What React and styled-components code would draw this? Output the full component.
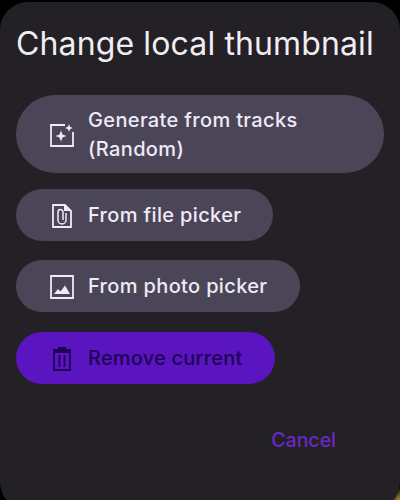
import styled, { createGlobalStyle } from 'styled-components'

const GlobalStyle = createGlobalStyle`
  html, body {
    margin: 0;
    height: 500px;
    overflow: hidden;
    background: radial-gradient(circle at 100% 100%, #a8843f 0, #3a2c16 9px, #000 14px);
  }
`;

const Dialog = styled.div`
  box-sizing: border-box;
  width: 400px;
  height: 508px;
  margin-top: 2px;
  padding: 22px 16px 0;
  border-radius: 28px;
  background: #232026;
  font-family: Inter, "Noto Sans", sans-serif;
`;

const Title = styled.h1`
  margin: 0 0 31px;
  font-size: 32px;
  line-height: 40px;
  font-weight: 400;
  letter-spacing: 0.13px;
  color: #f1edf2;
  white-space: nowrap;
`;

const Actions = styled.div`
  display: flex;
  flex-direction: column;
  align-items: flex-start;
`;

const Pill = styled.button`
  box-sizing: border-box;
  display: flex;
  align-items: center;
  gap: 14px;
  width: ${props => props.$width}px;
  min-height: 52px;
  margin-bottom: ${props => props.$after}px;
  padding: 1px 24px 0 34px;
  border: 0;
  border-radius: 39px;
  background: ${props => (props.$danger ? '#5a14c0' : '#4b4558')};
  color: ${props => (props.$danger ? '#1f0454' : '#f0e9f7')};
  font: 500 20px/29px Inter, "Noto Sans", sans-serif;
  letter-spacing: ${props => (props.$danger ? '0.2px' : '0.35px')};
  text-align: left;
`;

const TallPill = styled(Pill)`
  padding-top: 11px;
  padding-bottom: 9px;
`;

const Icon = styled.svg`
  flex: none;
  width: 24px;
  height: 24px;
  fill: none;
  stroke: currentColor;
  stroke-width: 1.8;
`;

const Footer = styled.div`
  display: flex;
  justify-content: flex-end;
  padding: 42px 48px 0 0;
`;

const Cancel = styled.button`
  padding: 0;
  border: 0;
  background: none;
  color: #6a28c6;
  font: 500 19.500px/28px Inter, "Noto Sans", sans-serif;
`;

const Sparkle = () => (
  <Icon viewBox="0 0 24 24">
    <path d="M15 2H1v21h22V9" />
    <path stroke="none" fill="currentColor" d="M11 7.5l1.5 4 4 1.500-4 1.500-1.500 4-1.500-4-4-1.500 4-1.500zM19 1l1 2.800 2.800 1.200-2.800 1.200-1 2.800-1-2.800-2.800-1.200 2.800-1.200z" />
  </Icon>
);

const FileClip = () => (
  <Icon viewBox="0 0 24 24">
    <path d="M3 1h12l6 6v16H3z" />
    <path strokeWidth="1.500" d="M16 9v7a4 4 0 0 1-8 0V8a2.500 2.500 0 0 1 5 0v8" />
    <path stroke="none" fill="currentColor" d="M14 0l8 7h-8z" />
  </Icon>
);

const Photo = () => (
  <Icon viewBox="0 0 24 24">
    <path d="M1 1h22v22H1z" />
    <path stroke="none" fill="currentColor" d="M4 19l4-5 2.500 2.500L15 10.500l5 8.500z" />
  </Icon>
);

const Trash = () => (
  <Icon viewBox="0 0 24 24">
    <path d="M4 5h16v18H4zM3 3h18M8 1h8M9.500 8v12M14.500 8v12" />
  </Icon>
);

export default function App() {
  return (
    <>
      <GlobalStyle />
      <Dialog>
        <Title>Change local thumbnail</Title>
        <Actions>
          <TallPill $width={368} $after={16}>
            <Sparkle />
            <span>Generate from tracks<br />(Random)</span>
          </TallPill>
          <Pill $width={257} $after={19}>
            <FileClip />
            From file picker
          </Pill>
          <Pill $width={284} $after={20}>
            <Photo />
            From photo picker
          </Pill>
          <Pill $width={259} $after={0} $danger>
            <Trash />
            Remove current
          </Pill>
        </Actions>
        <Footer>
          <Cancel>Cancel</Cancel>
        </Footer>
      </Dialog>
    </>
  )
}
